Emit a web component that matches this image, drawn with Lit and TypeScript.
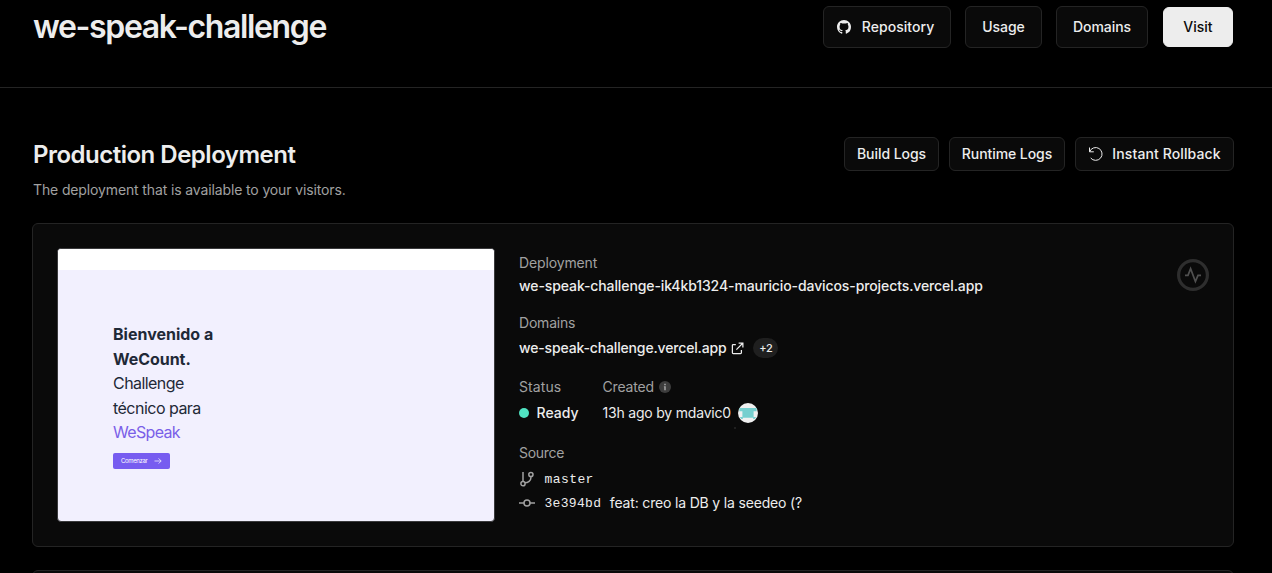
import { LitElement, html, css, svg } from "lit";
import { customElement } from "lit/decorators.js";

const github = html`<svg class="icon" width="14" height="14" viewBox="0 0 16 16" fill="currentColor"><path d="M8 0C3.58 0 0 3.58 0 8c0 3.54 2.29 6.53 5.47 7.59.4.07.55-.17.55-.38 0-.19-.01-.82-.01-1.49-2.01.37-2.53-.49-2.69-.94-.09-.23-.48-.94-.82-1.13-.28-.15-.68-.52-.01-.53.63-.01 1.08.58 1.23.82.72 1.21 1.87.87 2.33.66.07-.52.28-.87.51-1.07-1.78-.2-3.64-.89-3.64-3.95 0-.87.31-1.59.82-2.15-.08-.2-.36-1.02.08-2.12 0 0 .67-.21 2.2.82.64-.18 1.32-.27 2-.27s1.36.09 2 .27c1.53-1.04 2.2-.82 2.2-.82.44 1.1.16 1.92.08 2.12.51.56.82 1.27.82 2.15 0 3.07-1.87 3.75-3.65 3.95.29.25.54.73.54 1.48 0 1.07-.01 1.93-.01 2.2 0 .21.15.46.55.38A8.01 8.01 0 0 0 16 8c0-4.42-3.58-8-8-8Z"/></svg>`;

const rollback = html`<svg class="icon" width="16" height="16" viewBox="0 0 16 16" fill="none" stroke="currentColor" stroke-width="1"><path d="M1.5 1.5v4.3h4.3M1.7 5.6A6.4 6.4 0 1 1 2.7 12"/></svg>`;

const external = html`<svg class="icon" width="13" height="13" viewBox="0 0 14 14" fill="none" stroke="currentColor" stroke-width="1.35"><path d="M5.2 2.7H2.4a.9.9 0 0 0-.9.9v7.9c0 .5.4.9.9.9h7.9c.5 0 .9-.4.9-.9V8.7M8.2 1.2h4.6v4.6M12.6 1.4 5.8 8.2"/></svg>`;

const info = html`<svg class="icon" width="12" height="12" viewBox="0 0 12 12"><circle cx="6" cy="6" r="6" fill="#3d3d3d"/><path d="M5.2 2.8h1.6v1.5H5.2zM4.9 5.2h1.9v4H5.2V6.3h-.3z" fill="#a1a1a1"/></svg>`;

const avatar = html`<svg class="icon avatar" width="20" height="20" viewBox="0 0 20 20"><circle cx="10" cy="10" r="10" fill="#f0f0f0"/><path d="M1.4 5h17.2v3.2h-3V14h2.6l-1.6 2h-1.4v-1.2H4.8V16H3.4l-1.6-2h2.6V8.2h-3z" fill="#76cfcf"/></svg>`;

const branch = html`<svg class="icon dim" width="16" height="16" viewBox="0 0 16 16" fill="none" stroke="currentColor" stroke-width="1.5"><circle cx="4" cy="12.7" r="2.1"/><circle cx="11.9" cy="3.5" r="2.1"/><path d="M4 1v9.6M11.9 5.6v1.1c0 3-2.8 5.1-6 5.1"/></svg>`;

const commit = html`<svg class="icon dim" width="16" height="16" viewBox="0 0 16 16" fill="none" stroke="currentColor" stroke-width="1.5"><circle cx="8" cy="8" r="3"/><path d="M0 8h5M11 8h5"/></svg>`;

const pulse = html`<svg class="monitor" width="32" height="32" viewBox="0 0 32 32" fill="none"><circle cx="16" cy="16" r="14.4" stroke="#2e2e2e" stroke-width="3.2"/><path d="M8 16.3h3l2.6-6.6 4.8 12.8 2.6-6.2h3" stroke="#505050" stroke-width="1.7"/></svg>`;

const arrow = svg`<path d="M.5 4h6.6M4.6 1.4 7.2 4 4.6 6.6"/>`;

@customElement("app-root")
export class AppRoot extends LitElement {
  static styles = css`
    :host {
      display: block;
      height: 573px;
      overflow: hidden;
      background: #000;
      color: #ededed;
      font: 400 14px/20px Inter, "Liberation Sans", sans-serif;
    }
    * { box-sizing: border-box; }
    h1, h2, p { margin: 0; }
    div, span, h1, h2, p, button { white-space: nowrap; }
    .icon { display: block; flex: none; }
    header {
      display: flex;
      justify-content: space-between;
      align-items: flex-start;
      height: 88px;
      padding: 6px 39px 0 33px;
      border-bottom: 1px solid #242424;
    }
    h1 { padding-top: 1px; font-size: 32px; line-height: 40px; font-weight: 600; letter-spacing: -1.36px; }
    h2 { font-size: 24px; line-height: 32px; font-weight: 600; letter-spacing: -0.5px; }
    .actions { display: flex; align-items: center; }
    button {
      display: flex;
      align-items: center;
      justify-content: center;
      flex: none;
      padding: 0;
      height: 42px;
      border: 1px solid #242424;
      border-radius: 6px;
      background: #0a0a0a;
      color: #ededed;
      font: 500 14px/20px Inter, "Liberation Sans", sans-serif;
    }
    .top { gap: 14px; }
    .repo { width: 128px; gap: 11px; letter-spacing: 0.05px; padding-right: 3px; }
    .usage { width: 77px; letter-spacing: -0.1px; }
    .domains { width: 92px; letter-spacing: -0.05px; }
    .visit { width: 70px; height: 40px; margin-left: 1px; background: #ededed; border-color: #ededed; color: #0a0a0a; }
    .small { gap: 10px; }
    .small button { height: 34px; }
    .build { width: 95px; letter-spacing: -0.05px; }
    .runtime { width: 116px; letter-spacing: -0.07px; }
    .instant { width: 159px; gap: 8px; letter-spacing: 0.11px; }
    .section { display: flex; justify-content: space-between; align-items: flex-start; padding: 49px 38px 0 33px; }
    .heading { padding-top: 2px; }
    .sub { margin-top: 9px; color: #a1a1a1; letter-spacing: -0.13px; }
    .card {
      display: flex;
      align-items: flex-start;
      height: 324px;
      margin: 23px 38px 0 32px;
      padding: 25px 24px 0 25px;
      border: 1px solid #242424;
      border-radius: 6px;
      background: #0a0a0a;
    }
    .next { margin-top: 23px; }
    .preview {
      flex: none;
      width: 438px;
      height: 274px;
      border: 1px solid #3a3a3c;
      border-radius: 4px;
      overflow: hidden;
      background: #f2f0fe;
      margin-left: -1px;
      margin-top: -1px;
      color: #1f2937;
      font-size: 16px;
      line-height: 24.5px;
    }
    .bar { height: 21px; background: #fff; }
    .hero { padding: 52px 0 0 55px; }
    .hero b { font-weight: 700; display: block; }
    .b1 { letter-spacing: 0; }
    .b2 { letter-spacing: -0.05px; }
    .l1 { letter-spacing: -0.56px; }
    .l2 { letter-spacing: -0.52px; }
    .l3 { letter-spacing: -0.66px; color: #7a5fe8; }
    .cta {
      display: flex;
      align-items: center;
      justify-content: space-between;
      width: 57px;
      height: 16px;
      margin-top: 8px;
      padding: 0 8px;
      border-radius: 2px;
      background: #775cf0;
      color: #fff;
      font-size: 6px;
      line-height: 8px;
      letter-spacing: -0.35px;
    }
    .details { flex: 1; padding: 4px 0 0 24px; }
    .label { color: #a1a1a1; }
    .row { display: flex; align-items: center; height: 20px; }
    .strong { font-weight: 500; }
    .d1 { letter-spacing: -0.14px; }
    .url { margin-top: 3px; letter-spacing: -0.1px; }
    .group { margin-top: 17px; letter-spacing: -0.2px; }
    .host { letter-spacing: -0.155px; }
    .link { margin-top: 5px; }
    .link .icon { margin-left: 5px; }
    .pill {
      margin-left: 9px;
      width: 25px;
      height: 20px;
      border-radius: 10px;
      background: #1f1f1f;
      text-align: center;
      font-size: 11px;
      font-weight: 500;
      letter-spacing: -0.2px;
    }
    .meta { display: flex; margin-top: 19px; }
    .status { width: 83.5px; }
    .value { margin-top: 6px; }
    .s1 { letter-spacing: 0.1px; }
    .s2 { letter-spacing: -0.17px; }
    .s3 { letter-spacing: -0.3px; }
    .dot { width: 10px; height: 10px; border-radius: 50%; background: #50e3c2; margin-right: 7.5px; }
    .ready { letter-spacing: 0; }
    .ago { letter-spacing: -0.2px; }
    .created .label { gap: 5px; }
    .avatar { margin-left: 7px; }
    .speck { width: 2px; height: 2px; margin: 4px 0 0 131px; background: #1f1f1f; }
    .source { margin-top: 14px; }
    .dim { color: #a1a1a1; }
    .mono { font-family: "Liberation Mono", monospace; font-size: 13px; margin-left: 9.5px; }
    .m1 { padding-top: 2px; letter-spacing: 0.42px; }
    .m2 { padding-top: 1px; letter-spacing: 0.32px; }
    .branch { margin-top: 6px; }
    .commit { margin-top: 4px; }
    .message { margin-left: 8.5px; letter-spacing: -0.17px; }
    .monitor { display: block; flex: none; margin-top: 10px; }
  `;

  render() {
    return html`
      <header>
        <h1>we-speak-challenge</h1>
        <div class="actions top">
          <button class="repo">${github}<span>Repository</span></button>
          <button class="usage">Usage</button>
          <button class="domains">Domains</button>
          <button class="visit">Visit</button>
        </div>
      </header>
      <div class="section">
        <div class="heading">
          <h2>Production Deployment</h2>
          <p class="sub">The deployment that is available to your visitors.</p>
        </div>
        <div class="actions small">
          <button class="build">Build Logs</button>
          <button class="runtime">Runtime Logs</button>
          <button class="instant">${rollback}<span>Instant Rollback</span></button>
        </div>
      </div>
      <div class="card">
        <div class="preview">
          <div class="bar"></div>
          <div class="hero">
            <b class="b1">Bienvenido a</b>
            <b class="b2">WeCount.</b>
            <div class="l1">Challenge</div>
            <div class="l2">técnico para</div>
            <div class="l3">WeSpeak</div>
            <div class="cta"><span>Comenzar</span><svg width="8" height="8" viewBox="0 0 8 8" fill="none" stroke="#fff" stroke-width=".7">${arrow}</svg></div>
          </div>
        </div>
        <div class="details">
          <div class="label d1">Deployment</div>
          <div class="strong url">we-speak-challenge-ik4kb1324-mauricio-davicos-projects.vercel.app</div>
          <div class="label group">Domains</div>
          <div class="row link"><span class="strong host">we-speak-challenge.vercel.app</span>${external}<span class="pill">+2</span></div>
          <div class="meta">
            <div class="status">
              <div class="label s1">Status</div>
              <div class="row value"><span class="dot"></span><span class="strong ready">Ready</span></div>
            </div>
            <div class="created">
              <div class="row label"><span class="s2">Created</span>${info}</div>
              <div class="row value"><span class="ago">13h ago by mdavic0</span>${avatar}</div>
              <div class="speck"></div>
            </div>
          </div>
          <div class="label source s3">Source</div>
          <div class="row branch">${branch}<span class="mono m1">master</span></div>
          <div class="row commit">${commit}<span class="mono m2">3e394bd</span><span class="message">feat: creo la DB y la seedeo (?</span></div>
        </div>
        ${pulse}
      </div>
      <div class="card next"></div>
    `;
  }
}
